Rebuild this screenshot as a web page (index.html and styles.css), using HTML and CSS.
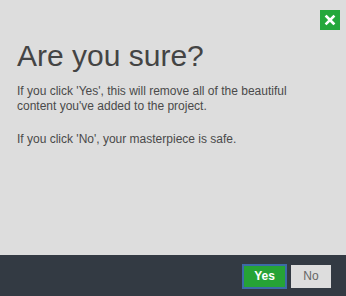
FILE: index.html
```html
<!DOCTYPE html>
<html>
<head>
<meta charset="utf-8">
<link rel="stylesheet" href="styles.css">
</head>
<body>
<div class="dialog">
  <div class="main">
    <div class="topbar">
      <button class="close" aria-label="Close">
        <svg width="20" height="20" viewBox="0 0 20 20"><path d="M6.5 6.5 L13.5 13.5 M13.5 6.5 L6.5 13.5" stroke="#fff" stroke-width="2.6" stroke-linecap="square" fill="none"/></svg>
      </button>
    </div>
    <h1 class="title">Are you sure?</h1>
    <p class="text">If you click 'Yes', this will remove all of the beautiful content you've added to the project.</p>
    <p class="text">If you click 'No', your masterpiece is safe.</p>
  </div>
  <div class="footer">
    <button class="btn btn-yes">Yes</button>
    <button class="btn btn-no">No</button>
  </div>
</div>
</body>
</html>
```
FILE: styles.css
```css
html, body {
  margin: 0;
  padding: 0;
}
body {
  width: 346px;
  height: 296px;
  overflow: hidden;
  font-family: "Liberation Sans", Arial, sans-serif;
}
.dialog {
  height: 296px;
  display: flex;
  flex-direction: column;
  background: #dddddd;
}
.main {
  flex: 1;
  padding: 0 17px;
}
.topbar {
  display: flex;
  justify-content: flex-end;
  padding-top: 10px;
  margin-right: -11px;
}
.close {
  width: 20px;
  height: 20px;
  padding: 0;
  border: 0;
  background: #24a83b;
  display: block;
  cursor: pointer;
}
.close svg {
  display: block;
}
.title {
  margin: 9px 0 12px;
  font-size: 30px;
  line-height: 33px;
  font-weight: normal;
  color: #444444;
}
.text {
  margin: 0 0 18px;
  font-size: 12px;
  line-height: 15px;
  color: #4a4a4a;
}
.footer {
  height: 41px;
  background: #333a43;
  display: flex;
  justify-content: flex-end;
  align-items: center;
  gap: 4px;
  padding: 1px 15px 0 0;
  box-sizing: border-box;
}
.btn {
  font-family: "Liberation Sans", Arial, sans-serif;
  font-size: 12px;
  padding: 0;
  margin: 0;
  cursor: pointer;
}
.btn-yes {
  width: 45px;
  height: 25px;
  background: #26a336;
  border: 2px solid #3c6ba6;
  color: #ffffff;
  font-weight: bold;
}
.btn-no {
  width: 40px;
  height: 23px;
  background: #dddddd;
  border: 0;
  color: #666666;
}
```
